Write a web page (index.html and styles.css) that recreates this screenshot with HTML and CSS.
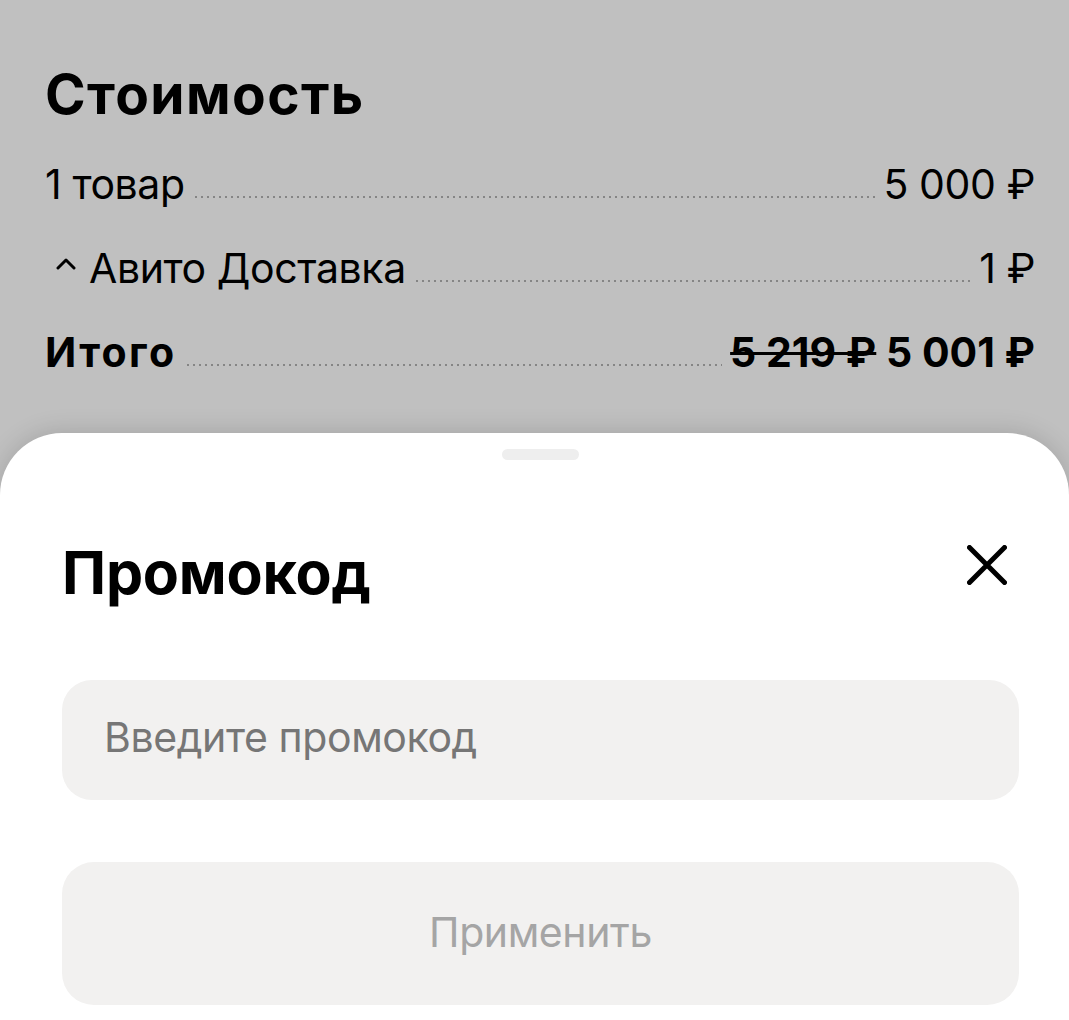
FILE: index.html
```html
<!DOCTYPE html>
<html lang="ru">
<head>
<meta charset="utf-8">
<title>Промокод</title>
<link rel="stylesheet" href="styles.css">
</head>
<body>
<div class="screen">
  <section class="summary">
    <h2 class="summary-title">Стоимость</h2>
    <div class="rows">
      <div class="row">
        <span class="label">1 товар</span>
        <span class="leader"></span>
        <span class="value">5 000 ₽</span>
      </div>
      <div class="row">
        <span class="label label-toggle">
          <svg class="caret" width="22" height="13" viewBox="0 0 22 13" aria-hidden="true"><path d="M3 11 L11 3 L19 11" fill="none" stroke="#000" stroke-width="3" stroke-linecap="round" stroke-linejoin="round"/></svg>
          Авито Доставка
        </span>
        <span class="leader"></span>
        <span class="value">1 ₽</span>
      </div>
      <div class="row row-total">
        <span class="label label-total">Итого</span>
        <span class="leader"></span>
        <span class="value"><s class="old">5 219 ₽</s> 5 001 ₽</span>
      </div>
    </div>
  </section>
  <section class="sheet">
    <div class="handle"></div>
    <div class="sheet-header">
      <h1 class="sheet-title">Промокод</h1>
      <button class="close" type="button" aria-label="Закрыть">
        <svg width="40" height="40" viewBox="0 0 40 40" aria-hidden="true"><path d="M2.5 2.5 L37.5 37.5 M37.5 2.5 L2.5 37.5" fill="none" stroke="#000" stroke-width="5" stroke-linecap="round"/></svg>
      </button>
    </div>
    <input class="promo-input" type="text" placeholder="Введите промокод">
    <button class="apply" type="button">Применить</button>
  </section>
</div>
</body>
</html>
```
FILE: styles.css
```css
* { box-sizing: border-box; }
html, body { margin: 0; padding: 0; }
body {
  font-family: "Inter", "Noto Sans", "Liberation Sans", sans-serif;
  color: #000;
  background: #c0c0c0;
  overflow: hidden;
}
.screen {
  width: 1069px;
  height: 1020px;
  display: flex;
  flex-direction: column;
  background: #c0c0c0;
  overflow: hidden;
}
.summary {
  flex: none;
  padding: 62px 34px 56px 45px;
}
.summary-title {
  margin: 0 0 33px;
  font-size: 55px;
  line-height: 64px;
  font-weight: 700;
  letter-spacing: 1.4px;
}
.rows {
  display: flex;
  flex-direction: column;
  gap: 34px;
}
.row {
  display: flex;
  align-items: flex-end;
  font-size: 41px;
  line-height: 50px;
  height: 50px;
  letter-spacing: -0.4px;
}
.label { white-space: nowrap; }
.label-toggle {
  display: flex;
  align-items: center;
  padding-left: 10px;
}
.caret {
  margin-right: 12px;
  margin-top: -10px;
}
.label-total { letter-spacing: 2.4px; }
.leader {
  flex: 1;
  height: 2px;
  margin: 0 8px 11px 10px;
  background-image: linear-gradient(to right, #858585 2px, transparent 2px);
  background-size: 6px 2px;
  background-repeat: repeat-x;
}
.value { white-space: nowrap; }
.row-total .value { letter-spacing: 0; }
.row-total { font-weight: 700; }
.old {
  text-decoration: line-through;
  text-decoration-thickness: 3px;
}
.sheet {
  flex: 1;
  background: #fff;
  border-radius: 62px 62px 0 0;
  box-shadow: 0 -2px 24px rgba(0, 0, 0, 0.14);
  padding: 16px 50px 0 62px;
  display: flex;
  flex-direction: column;
}
.handle {
  align-self: center;
  width: 77px;
  height: 11px;
  border-radius: 6px;
  background: #eeeeee;
}
.sheet-header {
  margin-top: 77px;
  display: flex;
  justify-content: space-between;
  align-items: flex-start;
}
.sheet-title {
  margin: 0;
  font-size: 59px;
  line-height: 72px;
  font-weight: 700;
  letter-spacing: -0.2px;
}
.close {
  width: 64px;
  height: 64px;
  margin-top: -4px;
  padding: 0;
  border: 0;
  background: transparent;
  display: flex;
  align-items: center;
  justify-content: center;
}
.promo-input {
  flex: none;
  margin-top: 71px;
  height: 120px;
  width: 100%;
  border: 0;
  border-radius: 30px;
  background: #f2f1f0;
  padding: 0 0 6px 42px;
  font-family: inherit;
  font-size: 41px;
  letter-spacing: -0.4px;
  color: #000;
  outline: none;
}
.promo-input::placeholder { color: #767676; }
.apply {
  flex: none;
  margin-top: 62px;
  height: 143px;
  width: 100%;
  border: 0;
  border-radius: 32px;
  background: #f2f1f0;
  font-family: inherit;
  font-size: 41px;
  letter-spacing: -0.4px;
  color: #a5a5a5;
  padding: 0 0 4px;
}
```
